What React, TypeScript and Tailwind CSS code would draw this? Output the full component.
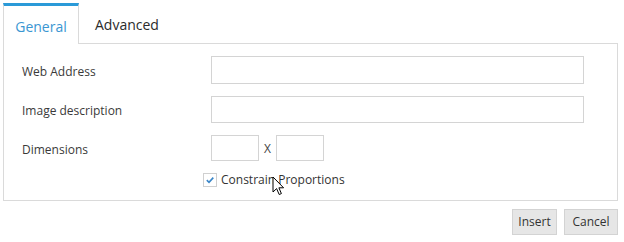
import React from "react";

export default function App() {
  return (
    <div
      className="w-[624px] h-[242px] bg-white pl-[3px] pt-[3px] pr-[6px] relative"
      style={{ fontFamily: '"Open Sans", "Noto Sans", sans-serif' }}
    >
      {/* Tabs */}
      <div className="flex h-[40px] items-stretch">
        <div className="relative z-10 w-[76px] h-[41px] border-t-[3px] border-t-[#2a9ad8] border-x border-x-[#dadada] bg-white flex items-center justify-center pt-[2px] text-[14px] text-[#3a96d2]">
          General
        </div>
        <div className="flex items-center pl-[16px] pt-[3px] text-[14px] text-[#2b2b2b]">
          Advanced
        </div>
      </div>
      {/* Panel */}
      <div className="border border-[#dadada] h-[158px] pl-[18px] pr-[33px] pt-[12px]">
        <div className="grid grid-cols-[189px_1fr] gap-y-[12px] items-center text-[12px] text-[#3a3a3a]">
          <div className="pt-[3px]">Web Address</div>
          <div className="h-[28px] border border-[#d4d4d4] bg-white"></div>
          <div className="pt-[3px]">Image description</div>
          <div className="h-[27px] border border-[#d4d4d4] bg-white"></div>
          <div className="pt-[4px]">Dimensions</div>
          <div className="flex items-center">
            <div className="w-[48px] h-[26px] border border-[#d4d4d4]"></div>
            <div className="w-[17px] text-center text-[#444] pt-[2px]">X</div>
            <div className="w-[48px] h-[26px] border border-[#d4d4d4]"></div>
          </div>
        </div>
        <div className="flex items-center ml-[181px] mt-[10px] text-[12px] text-[#333]">
          <div className="w-[14px] h-[14px] border border-[#d0d0d0] bg-white flex items-center justify-center">
            <svg width="10" height="10" viewBox="0 0 10 10">
              <path d="M1.8 5.2 L4 7.3 L8.3 2.6" fill="none" stroke="#3a86c8" strokeWidth="1.6" />
            </svg>
          </div>
          <span className="ml-[4px]">Constrain Proportions</span>
        </div>
      </div>
      {/* Buttons */}
      <div className="flex justify-end gap-[7px] mt-[8px]">
        <div className="w-[45px] h-[26px] bg-[#e6e6e6] border border-[#d3d3d3] flex items-center justify-center text-[12px] text-[#333]">
          Insert
        </div>
        <div className="w-[54px] h-[26px] bg-[#e6e6e6] border border-[#d3d3d3] flex items-center justify-center text-[12px] text-[#333]">
          Cancel
        </div>
      </div>
      {/* Mouse cursor */}
      <svg
        className="absolute left-[272px] top-[176px]"
        width="14"
        height="22"
        viewBox="0 0 14 22"
      >
        <path
          d="M1 1 L1 16 L4.6 12.6 L7.2 18.5 L9.4 17.6 L6.9 11.8 L11.6 11.8 Z"
          fill="#fff"
          stroke="#000"
          strokeWidth="1"
          strokeLinejoin="round"
        />
      </svg>
    </div>
  );
}
